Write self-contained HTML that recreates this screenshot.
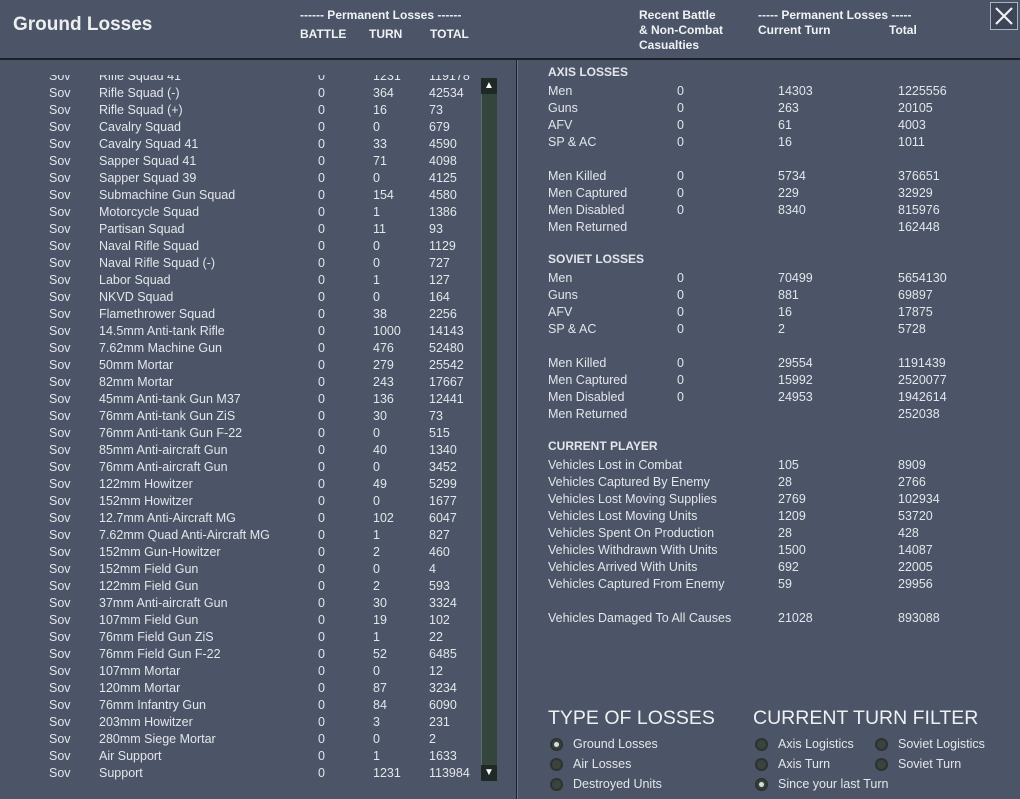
<!DOCTYPE html>
<html><head><meta charset="utf-8"><style>
body{margin:0;width:1020px;height:799px;background:#4b5567;font-family:"Liberation Sans",sans-serif;color:#e3e6ea;overflow:hidden;position:relative}
.a{position:absolute;white-space:nowrap}
.t{font-size:19px;font-weight:bold;color:#eceef0}
.h{font-size:12px;font-weight:bold;color:#f0f2f4;line-height:15px}
.lst{position:absolute;left:0;top:75px;width:480px;height:708px;overflow:hidden;font-size:12.5px}
.r{height:17px;line-height:17px;position:relative}
.r span{position:absolute}
.r span:nth-child(1){left:49px}.r span:nth-child(2){left:99px}.r span:nth-child(3){left:318px}.r span:nth-child(4){left:373px}.r span:nth-child(5){left:429px}
.rt{position:absolute;left:0;font-size:12.5px;width:1020px}
.q{height:17px;line-height:17px;position:relative}
.q span{position:absolute}
.q span:nth-child(1){left:548px}.q span:nth-child(2){left:677px}.q span:nth-child(3){left:778px}.q span:nth-child(4){left:898px}
.sec{font-weight:bold;font-size:12px}
.big{font-size:19.5px;color:#eef0f2}
.rad{position:absolute;width:13px;height:13px;border-radius:50%;background:#3a4340;box-shadow:inset 0 0 0 2px #2c3330}
.rad.on::after{content:"";position:absolute;left:4px;top:4px;width:5px;height:5px;border-radius:50%;background:#d8dcd8}
.lb{position:absolute;font-size:12.5px}
</style></head><body>
<div class="a" style="left:0;top:58px;width:1020px;height:2px;background:#1c2028"></div>
<div class="a" style="left:516px;top:60px;width:1px;height:739px;background:#1c2028"></div>
<div class="a" style="left:517px;top:60px;width:1px;height:739px;background:#6a7484"></div>
<div class="a t" style="left:13px;top:14px">Ground Losses</div>
<div class="a h" style="left:300px;top:8px">------ Permanent Losses ------</div>
<div class="a h" style="left:300px;top:27px">BATTLE</div>
<div class="a h" style="left:369px;top:27px">TURN</div>
<div class="a h" style="left:430px;top:27px">TOTAL</div>
<div class="a h" style="left:639px;top:8px">Recent Battle<br>&amp; Non-Combat<br>Casualties</div>
<div class="a h" style="left:758px;top:8px">----- Permanent Losses -----<br>Current Turn</div>
<div class="a h" style="left:889px;top:23px">Total</div>
<div class="a" style="left:990px;top:2px;width:28px;height:28px;border:1px solid #aab4bc;box-sizing:border-box;background:#3c4656">
<svg width="26" height="26" viewBox="0 0 26 26"><path d="M5 5L21 21M21 5L5 21" stroke="#eef0f2" stroke-width="2.2"/></svg></div>

<div class="lst"><div style="margin-top:-7.5px">
<div class="r"><span>Sov</span><span>Rifle Squad 41</span><span>0</span><span>1231</span><span>119178</span></div>
<div class="r"><span>Sov</span><span>Rifle Squad (-)</span><span>0</span><span>364</span><span>42534</span></div>
<div class="r"><span>Sov</span><span>Rifle Squad (+)</span><span>0</span><span>16</span><span>73</span></div>
<div class="r"><span>Sov</span><span>Cavalry Squad</span><span>0</span><span>0</span><span>679</span></div>
<div class="r"><span>Sov</span><span>Cavalry Squad 41</span><span>0</span><span>33</span><span>4590</span></div>
<div class="r"><span>Sov</span><span>Sapper Squad 41</span><span>0</span><span>71</span><span>4098</span></div>
<div class="r"><span>Sov</span><span>Sapper Squad 39</span><span>0</span><span>0</span><span>4125</span></div>
<div class="r"><span>Sov</span><span>Submachine Gun Squad</span><span>0</span><span>154</span><span>4580</span></div>
<div class="r"><span>Sov</span><span>Motorcycle Squad</span><span>0</span><span>1</span><span>1386</span></div>
<div class="r"><span>Sov</span><span>Partisan Squad</span><span>0</span><span>11</span><span>93</span></div>
<div class="r"><span>Sov</span><span>Naval Rifle Squad</span><span>0</span><span>0</span><span>1129</span></div>
<div class="r"><span>Sov</span><span>Naval Rifle Squad (-)</span><span>0</span><span>0</span><span>727</span></div>
<div class="r"><span>Sov</span><span>Labor Squad</span><span>0</span><span>1</span><span>127</span></div>
<div class="r"><span>Sov</span><span>NKVD Squad</span><span>0</span><span>0</span><span>164</span></div>
<div class="r"><span>Sov</span><span>Flamethrower Squad</span><span>0</span><span>38</span><span>2256</span></div>
<div class="r"><span>Sov</span><span>14.5mm Anti-tank Rifle</span><span>0</span><span>1000</span><span>14143</span></div>
<div class="r"><span>Sov</span><span>7.62mm Machine Gun</span><span>0</span><span>476</span><span>52480</span></div>
<div class="r"><span>Sov</span><span>50mm Mortar</span><span>0</span><span>279</span><span>25542</span></div>
<div class="r"><span>Sov</span><span>82mm Mortar</span><span>0</span><span>243</span><span>17667</span></div>
<div class="r"><span>Sov</span><span>45mm Anti-tank Gun M37</span><span>0</span><span>136</span><span>12441</span></div>
<div class="r"><span>Sov</span><span>76mm Anti-tank Gun ZiS</span><span>0</span><span>30</span><span>73</span></div>
<div class="r"><span>Sov</span><span>76mm Anti-tank Gun F-22</span><span>0</span><span>0</span><span>515</span></div>
<div class="r"><span>Sov</span><span>85mm Anti-aircraft Gun</span><span>0</span><span>40</span><span>1340</span></div>
<div class="r"><span>Sov</span><span>76mm Anti-aircraft Gun</span><span>0</span><span>0</span><span>3452</span></div>
<div class="r"><span>Sov</span><span>122mm Howitzer</span><span>0</span><span>49</span><span>5299</span></div>
<div class="r"><span>Sov</span><span>152mm Howitzer</span><span>0</span><span>0</span><span>1677</span></div>
<div class="r"><span>Sov</span><span>12.7mm Anti-Aircraft MG</span><span>0</span><span>102</span><span>6047</span></div>
<div class="r"><span>Sov</span><span>7.62mm Quad Anti-Aircraft MG</span><span>0</span><span>1</span><span>827</span></div>
<div class="r"><span>Sov</span><span>152mm Gun-Howitzer</span><span>0</span><span>2</span><span>460</span></div>
<div class="r"><span>Sov</span><span>152mm Field Gun</span><span>0</span><span>0</span><span>4</span></div>
<div class="r"><span>Sov</span><span>122mm Field Gun</span><span>0</span><span>2</span><span>593</span></div>
<div class="r"><span>Sov</span><span>37mm Anti-aircraft Gun</span><span>0</span><span>30</span><span>3324</span></div>
<div class="r"><span>Sov</span><span>107mm Field Gun</span><span>0</span><span>19</span><span>102</span></div>
<div class="r"><span>Sov</span><span>76mm Field Gun ZiS</span><span>0</span><span>1</span><span>22</span></div>
<div class="r"><span>Sov</span><span>76mm Field Gun F-22</span><span>0</span><span>52</span><span>6485</span></div>
<div class="r"><span>Sov</span><span>107mm Mortar</span><span>0</span><span>0</span><span>12</span></div>
<div class="r"><span>Sov</span><span>120mm Mortar</span><span>0</span><span>87</span><span>3234</span></div>
<div class="r"><span>Sov</span><span>76mm Infantry Gun</span><span>0</span><span>84</span><span>6090</span></div>
<div class="r"><span>Sov</span><span>203mm Howitzer</span><span>0</span><span>3</span><span>231</span></div>
<div class="r"><span>Sov</span><span>280mm Siege Mortar</span><span>0</span><span>0</span><span>2</span></div>
<div class="r"><span>Sov</span><span>Air Support</span><span>0</span><span>1</span><span>1633</span></div>
<div class="r"><span>Sov</span><span>Support</span><span>0</span><span>1231</span><span>113984</span></div>
</div></div>

<div class="a" style="left:481px;top:78px;width:16px;height:703px;background:#34453e;border-left:1px solid #5a6e64;box-sizing:border-box"></div>
<div class="a" style="left:481px;top:78px;width:16px;height:16px;background:#1f2a26;color:#fff;font-size:10px;text-align:center;line-height:16px">▲</div>
<div class="a" style="left:481px;top:765px;width:16px;height:16px;background:#1f2a26;color:#fff;font-size:10px;text-align:center;line-height:16px">▼</div>

<div class="rt" style="top:63.5px">
<div class="q sec"><span>AXIS LOSSES</span></div>
<div class="q" style="margin-top:2px"><span>Men</span><span>0</span><span>14303</span><span>1225556</span></div>
<div class="q"><span>Guns</span><span>0</span><span>263</span><span>20105</span></div>
<div class="q"><span>AFV</span><span>0</span><span>61</span><span>4003</span></div>
<div class="q"><span>SP &amp; AC</span><span>0</span><span>16</span><span>1011</span></div>
<div class="q" style="margin-top:17px"><span>Men Killed</span><span>0</span><span>5734</span><span>376651</span></div>
<div class="q"><span>Men Captured</span><span>0</span><span>229</span><span>32929</span></div>
<div class="q"><span>Men Disabled</span><span>0</span><span>8340</span><span>815976</span></div>
<div class="q"><span>Men Returned</span><span></span><span></span><span>162448</span></div>
<div class="q sec" style="margin-top:15px"><span>SOVIET LOSSES</span></div>
<div class="q" style="margin-top:2px"><span>Men</span><span>0</span><span>70499</span><span>5654130</span></div>
<div class="q"><span>Guns</span><span>0</span><span>881</span><span>69897</span></div>
<div class="q"><span>AFV</span><span>0</span><span>16</span><span>17875</span></div>
<div class="q"><span>SP &amp; AC</span><span>0</span><span>2</span><span>5728</span></div>
<div class="q" style="margin-top:17px"><span>Men Killed</span><span>0</span><span>29554</span><span>1191439</span></div>
<div class="q"><span>Men Captured</span><span>0</span><span>15992</span><span>2520077</span></div>
<div class="q"><span>Men Disabled</span><span>0</span><span>24953</span><span>1942614</span></div>
<div class="q"><span>Men Returned</span><span></span><span></span><span>252038</span></div>
<div class="q sec" style="margin-top:15px"><span>CURRENT PLAYER</span></div>
<div class="q" style="margin-top:2px"><span>Vehicles Lost in Combat</span><span></span><span>105</span><span>8909</span></div>
<div class="q"><span>Vehicles Captured By Enemy</span><span></span><span>28</span><span>2766</span></div>
<div class="q"><span>Vehicles Lost Moving Supplies</span><span></span><span>2769</span><span>102934</span></div>
<div class="q"><span>Vehicles Lost Moving Units</span><span></span><span>1209</span><span>53720</span></div>
<div class="q"><span>Vehicles Spent On Production</span><span></span><span>28</span><span>428</span></div>
<div class="q"><span>Vehicles Withdrawn With Units</span><span></span><span>1500</span><span>14087</span></div>
<div class="q"><span>Vehicles Arrived With Units</span><span></span><span>692</span><span>22005</span></div>
<div class="q"><span>Vehicles Captured From Enemy</span><span></span><span>59</span><span>29956</span></div>
<div class="q" style="margin-top:17px"><span>Vehicles Damaged To All Causes</span><span></span><span>21028</span><span>893088</span></div>
</div>

<div class="a big" style="left:548px;top:707px">TYPE OF LOSSES</div>
<div class="a big" style="left:753px;top:707px">CURRENT TURN FILTER</div>
<div class="rad on" style="left:550px;top:738px"></div><div class="lb" style="left:573px;top:737px">Ground Losses</div>
<div class="rad" style="left:550px;top:758px"></div><div class="lb" style="left:573px;top:757px">Air Losses</div>
<div class="rad" style="left:550px;top:778px"></div><div class="lb" style="left:573px;top:777px">Destroyed Units</div>
<div class="rad" style="left:755px;top:738px"></div><div class="lb" style="left:778px;top:737px">Axis Logistics</div>
<div class="rad" style="left:755px;top:758px"></div><div class="lb" style="left:778px;top:757px">Axis Turn</div>
<div class="rad on" style="left:755px;top:778px"></div><div class="lb" style="left:778px;top:777px">Since your last Turn</div>
<div class="rad" style="left:875px;top:738px"></div><div class="lb" style="left:898px;top:737px">Soviet Logistics</div>
<div class="rad" style="left:875px;top:758px"></div><div class="lb" style="left:898px;top:757px">Soviet Turn</div>
</body></html>
